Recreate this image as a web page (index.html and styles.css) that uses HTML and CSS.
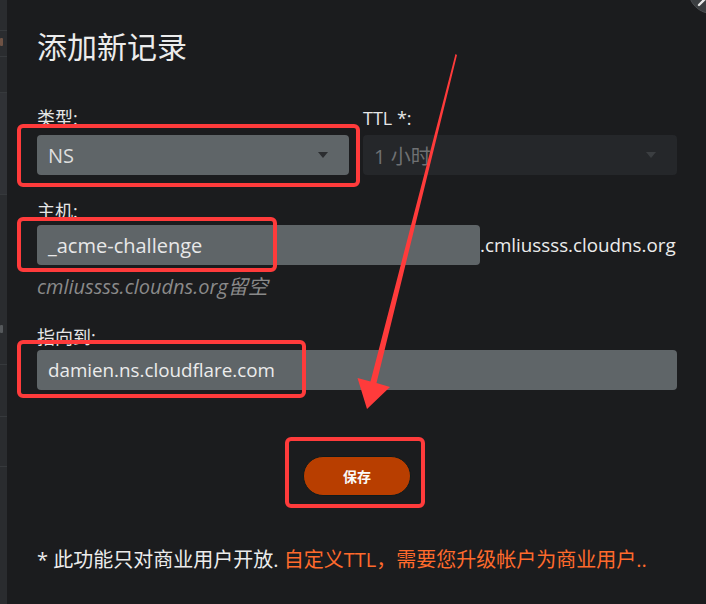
FILE: index.html
```html
<!DOCTYPE html>
<html lang="zh">
<head>
<meta charset="utf-8">
<link rel="stylesheet" href="styles.css">
</head>
<body>
<div class="page">
  <div class="side">
    <div class="side-row r1"></div>
    <div class="side-row r2"><i class="side-dot"></i></div>
    <div class="side-row r3"></div>
    <div class="side-row r4"></div>
    <div class="side-row r5"><i class="side-dot low"></i></div>
    <div class="side-row r6"></div>
    <div class="side-row r7"></div>
    <div class="side-row r8"></div>
  </div>
  <div class="modal">
    <h1 class="title">添加新记录</h1>
    <div class="grid2">
      <div class="field">
        <label class="label">类型:</label>
        <div class="select"><span>NS</span><i class="caret"></i></div>
      </div>
      <div class="field">
        <label class="label">TTL *:</label>
        <div class="select disabled"><span>1 小时</span><i class="caret dim"></i></div>
      </div>
    </div>
    <div class="field host">
      <label class="label">主机:</label>
      <div class="host-row">
        <div class="input host-input">_acme-challenge</div>
        <span class="suffix">.cmliussss.cloudns.org</span>
      </div>
      <div class="hint">cmliussss.cloudns.org留空</div>
    </div>
    <div class="field target">
      <label class="label">指向到:</label>
      <div class="input">damien.ns.cloudflare.com</div>
    </div>
    <div class="actions">
      <button class="save">保存</button>
    </div>
    <p class="note">* 此功能只对商业用户开放. <span class="warn">自定义TTL，需要您升级帐户为商业用户..</span></p>
  </div>
  <div class="close-btn"><svg width="12" height="12" viewBox="0 0 12 12"><path d="M2 10 L9 3" stroke="#e8e8e8" stroke-width="2.4" stroke-linecap="round"/></svg></div>
  <div class="mark m1"></div>
  <div class="mark m2"></div>
  <div class="mark m3"></div>
  <div class="mark m4"></div>
  <svg class="arrow" width="706" height="604" viewBox="0 0 706 604">
    <polygon points="455.5,54 457,55 376.5,383 390,387 367,409 357.5,378 370.5,381.5" fill="#ff3b3b"/>
  </svg>
</div>
</body>
</html>
```

FILE: styles.css
```css
* { box-sizing: border-box; }
html, body { margin: 0; padding: 0; }
body {
  width: 706px;
  height: 604px;
  overflow: hidden;
  background: #1b1c1e;
  font-family: "Open Sans", "Noto Sans CJK SC", sans-serif;
  color: #e4e4e4;
}
.page {
  position: relative;
  display: flex;
  width: 706px;
  height: 604px;
}
.side {
  width: 7px;
  flex: none;
  background: #2a2c2f;
  display: flex;
  flex-direction: column;
}
.side-row { border-bottom: 1px solid #36393c; overflow: hidden; position: relative; }
.side-dot {
  display: block;
  width: 3px;
  height: 8px;
  margin-top: 7px;
  background: #6e5244;
  border-radius: 1px;
}
.side-dot.low { margin-top: 130px; background: #55585b; }
.r1 { height: 31px; }
.r2 { height: 26px; }
.r3 { height: 36px; }
.r4 { height: 102px; background: #303236; }
.r5 { height: 170px; }
.r6 { height: 52px; }
.r7 { height: 50px; }
.r8 { flex: 1; border-bottom: none; }
.modal {
  flex: 1;
  min-width: 0;
  background: #1b1c1e;
  padding: 26px 29px 0 30px;
}
.title {
  margin: 0;
  font-size: 30px;
  font-weight: 400;
  line-height: 42px;
  color: #ececec;
}
.grid2 {
  display: grid;
  grid-template-columns: 312px 314px;
  column-gap: 14px;
  margin-top: 39px;
}
.label {
  display: block;
  font-size: 18px;
  line-height: 22px;
  height: 24px;
  color: #e6e6e6;
  margin-bottom: 4px;
}
.select, .input {
  height: 40px;
  border-radius: 4px;
  background: #5f6568;
  display: flex;
  align-items: center;
  padding: 0 11px;
  font-size: 20px;
  color: #dedede;
}
.select { justify-content: space-between; }
.select.disabled { background: #25272a; color: #6f7173; }
.caret {
  width: 0; height: 0;
  border-left: 5px solid transparent;
  border-right: 5px solid transparent;
  border-top: 6px solid #2b2d30;
  margin-right: 10px;
}
.caret.dim { border-top-color: #3b3e41; }
.host { margin-top: 25px; }
.host .label { height: 22px; margin-bottom: 3px; }
.host-row { display: flex; align-items: center; }
.host-input { width: 443px; flex: none; color: #e8e8e8; }
.suffix { font-size: 18.8px; color: #ececec; white-space: nowrap; }
.hint {
  margin-top: 9px;
  font-size: 20px;
  line-height: 26px;
  font-style: italic;
  color: #8a8a8a;
}
.target { margin-top: 26px; }
.target .label { height: 24px; margin-bottom: 0; }
.target .input { color: #ececec; font-size: 18.8px; }
.actions {
  display: flex;
  justify-content: center;
  margin-top: 66px;
}
.save {
  width: 108px;
  height: 40px;
  border-radius: 20px;
  border: 1px solid #0e1a1c;
  background: #b83e00;
  color: #fafafa;
  font-family: "Noto Sans CJK SC", sans-serif;
  font-weight: 700;
  font-size: 14px;
}
.note {
  margin: 52px 0 0 0;
  font-size: 20px;
  line-height: 24px;
  color: #ececec;
  white-space: nowrap;
}
.warn { color: #ff6a2c; }
.close-btn {
  position: absolute;
  left: 688px;
  top: -34px;
  width: 48px;
  height: 48px;
  border-radius: 50%;
  background: #3b3e41;
  border: 1px solid #4a4d50;
  display: flex;
  align-items: flex-end;
  padding: 0 0 6px 8px;
}
.mark {
  position: absolute;
  border: 4px solid #ff3b3b;
  border-radius: 6px;
}
.m1 { left: 17px; top: 124px; width: 343px; height: 63px; }
.m2 { left: 17px; top: 217px; width: 260px; height: 55px; }
.m3 { left: 17px; top: 340px; width: 289px; height: 58px; }
.m4 { left: 285px; top: 437px; width: 140px; height: 71px; }
.arrow { position: absolute; left: 0; top: 0; pointer-events: none; }
```
